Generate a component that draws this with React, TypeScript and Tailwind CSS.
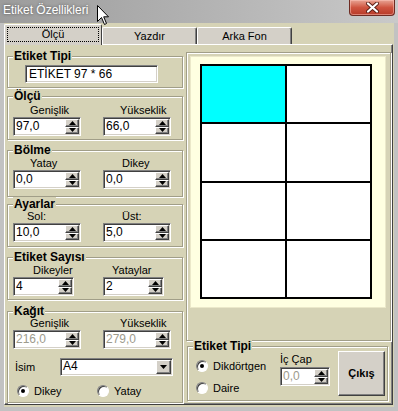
import type { ReactNode } from "react";

const raised =
  "border border-t-white border-l-white border-r-[#404040] border-b-[#404040] bg-[#d4d0c8] shadow-[inset_-1px_-1px_0_#808080]";
const sunken =
  "border border-t-[#808080] border-l-[#808080] border-r-white border-b-white bg-white shadow-[inset_1px_1px_0_#404040,inset_-1px_-1px_0_#d4d0c8]";

function Arrow({ down }: { down?: boolean }) {
  return (
    <svg width="7" height="4" viewBox="0 0 7 4">
      <path d={down ? "M0 0H7L3.5 4Z" : "M3.5 0L7 4H0Z"} fill="black" />
    </svg>
  );
}

function Spin({
  value,
  className = "",
  disabled,
}: {
  value: string;
  className?: string;
  disabled?: boolean;
}) {
  return (
    <div className={`flex h-[19px] ${sunken} ${className}`}>
      <div
        className={`flex-1 pl-[2px] pt-[1px] text-[12px] leading-[15px] ${
          disabled ? "text-[#9d9b8d]" : "text-black"
        }`}
      >
        {value}
      </div>
      <div className="flex w-[15px] flex-col py-[1px] pr-[1px]">
        <div className={`flex flex-1 items-center justify-center ${raised}`}>
          <Arrow />
        </div>
        <div className={`flex flex-1 items-center justify-center ${raised}`}>
          <Arrow down />
        </div>
      </div>
    </div>
  );
}

function Radio({ checked, label }: { checked?: boolean; label: string }) {
  return (
    <div className="flex h-[12px] items-center gap-[5px]">
      <div className="flex h-[12px] w-[12px] items-center justify-center rounded-full border border-t-[#808080] border-l-[#808080] border-r-white border-b-white bg-white shadow-[inset_1px_1px_0_#404040]">
        {checked && <div className="h-[4px] w-[4px] rounded-full bg-black" />}
      </div>
      <span className="text-[11px] leading-[13px]">{label}</span>
    </div>
  );
}

function Group({
  title,
  className,
  children,
}: {
  title: string;
  className: string;
  children?: ReactNode;
}) {
  return (
    <div
      className={`relative shrink-0 border border-[#a19e88] shadow-[inset_1px_1px_0_#fff,1px_1px_0_#fff] ${className}`}
    >
      <span className="absolute -top-[8px] left-[5px] bg-[#d6d3b6] px-[1px] text-[12px] font-bold leading-[14px]">
        {title}
      </span>
      {children}
    </div>
  );
}

function Pair({
  top,
  labels,
  pads,
  values,
  wide = true,
  disabled,
}: {
  top: string;
  labels: [string, string];
  pads: [string, string];
  values: [string, string];
  wide?: boolean;
  disabled?: boolean;
}) {
  const w = wide ? "w-[68px]" : "w-[61px]";
  return (
    <div className={top}>
      <div className="flex h-[13px] text-[11px] leading-[13px]">
        <div className={`w-[89px] ${pads[0]}`}>{labels[0]}</div>
        <div className={pads[1]}>{labels[1]}</div>
      </div>
      <div className="flex">
        <div className="w-[89px]">
          <Spin value={values[0]} className={`ml-[5px] ${w}`} disabled={disabled} />
        </div>
        <Spin value={values[1]} className={`ml-[6px] ${w}`} disabled={disabled} />
      </div>
    </div>
  );
}

function Tab({ label, selected }: { label: string; selected?: boolean }) {
  if (selected) {
    return (
      <div className="relative z-10 -mb-[1px] flex h-[21px] w-[98px] rounded-t-[2px] border border-b-0 border-t-white border-l-white border-r-[#404040] bg-[#d4d0c8] p-[2px] pb-[3px]">
        <div className="flex flex-1 items-center justify-center border border-dotted border-black text-[11px] leading-[13px]">
          {label}
        </div>
      </div>
    );
  }
  return (
    <div className="flex h-[17px] w-[95px] items-center justify-center rounded-t-[2px] border border-b-0 border-t-white border-l-white border-r-[#404040] bg-[#d4d0c8] text-[11px] leading-[13px] shadow-[inset_-1px_0_0_#808080]">
      {label}
    </div>
  );
}

export default function App() {
  const cells = [true, false, false, false, false, false, false, false];
  return (
    <div className="relative h-[411px] w-[398px] overflow-hidden bg-[#c2c2c2] font-['Liberation_Sans',Arial,sans-serif] text-black select-none">
      <div className="flex h-[23px] items-start justify-between bg-linear-to-r from-[#9c9c9c] via-[#b2b2b2] to-[#c9c9c9]">
        <span className="ml-[3px] mt-[3px] text-[12px] leading-[14px] text-white [text-shadow:0_0_3px_rgba(70,70,70,0.9)]">
          Etiket Özellikleri
        </span>
        <div className="mr-[3px] flex h-[16px] w-[46px] items-center justify-center rounded-b-[4px] border border-t-0 border-[#6e2b22] bg-linear-to-b from-[#e7a394] via-[#cf5440] to-[#b63a28] shadow-[inset_0_0_0_1px_rgba(255,200,190,0.5)]">
          <svg width="13" height="11" viewBox="0 0 13 11">
            <path
              d="M2 1.5L11 9.5M11 1.5L2 9.5"
              stroke="#5a1d15"
              strokeWidth="4"
              strokeLinecap="round"
            />
            <path
              d="M2 1.5L11 9.5M11 1.5L2 9.5"
              stroke="white"
              strokeWidth="2.2"
              strokeLinecap="round"
            />
          </svg>
        </div>
      </div>

      <div className="mx-[4px] flex h-[384px] flex-col bg-[#d6d3b6]">
        <div className="flex h-[21px] items-end">
          <Tab label="Ölçü" selected />
          <Tab label="Yazdır" />
          <Tab label="Arka Fon" />
        </div>

        <div className="flex h-[361px] w-[389px] border border-t-white border-l-white border-r-[#404040] border-b-[#404040] shadow-[inset_-1px_-1px_0_#808080]">
          <div className="ml-[2px] flex w-[176px] flex-col">
            <Group title="Etiket Tipi" className="mt-[11px] h-[32px]">
              <div
                className={`ml-[17px] mt-[8px] h-[18px] w-[133px] pl-[3px] text-[12px] leading-[16px] ${sunken}`}
              >
                ETİKET 97 * 66
              </div>
            </Group>

            <Group title="Ölçü" className="mt-[8px] h-[44px]">
              <Pair
                top="mt-[7px]"
                labels={["Genişlik", "Yükseklik"]}
                pads={["pl-[22px]", "pl-[23px]"]}
                values={["97,0", "66,0"]}
              />
            </Group>

            <Group title="Bölme" className="mt-[10px] h-[47px]">
              <Pair
                top="mt-[6px]"
                labels={["Yatay", "Dikey"]}
                pads={["pl-[22px]", "pl-[25px]"]}
                values={["0,0", "0,0"]}
              />
            </Group>

            <Group title="Ayarlar" className="mt-[7px] h-[43px]">
              <Pair
                top="mt-[5px]"
                labels={["Sol:", "Üst:"]}
                pads={["pl-[19px]", "pl-[25px]"]}
                values={["10,0", "5,0"]}
              />
            </Group>

            <Group title="Etiket Sayısı" className="mt-[10px] h-[43px]">
              <Pair
                top="mt-[6px]"
                labels={["Dikeyler", "Yataylar"]}
                pads={["pl-[25px]", "pl-[15px]"]}
                values={["4", "2"]}
                wide={false}
              />
            </Group>

            <Group title="Kağıt" className="mt-[11px] h-[92px]">
              <Pair
                top="mt-[5px]"
                labels={["Genişlik", "Yükseklik"]}
                pads={["pl-[22px]", "pl-[23px]"]}
                values={["216,0", "279,0"]}
                disabled
              />
              <div className="mt-[9px] flex h-[18px] items-center">
                <span className="w-[52px] pl-[7px] text-[11px] leading-[13px]">İsim</span>
                <div className={`flex h-[18px] w-[113px] ${sunken}`}>
                  <div className="flex-1 pl-[2px] text-[12px] leading-[15px]">A4</div>
                  <div className={`m-[1px] flex w-[15px] items-center justify-center ${raised}`}>
                    <Arrow down />
                  </div>
                </div>
              </div>
              <div className="mt-[9px] flex">
                <div className="w-[89px] pl-[9px]">
                  <Radio checked label="Dikey" />
                </div>
                <Radio label="Yatay" />
              </div>
            </Group>
          </div>

          <div className="ml-[3px] flex w-[206px] flex-col">
            <div className="mt-[7px] h-[289px] w-[205px] shrink-0 border border-[#a19e88] shadow-[inset_1px_1px_0_#fff,1px_1px_0_#fff]">
              <div className="ml-[3px] mt-[3px] h-[252px] w-[196px] border border-[#ebe8c9] bg-[#ffffe1] pl-[9px] pt-[7px]">
                <div className="grid h-[235px] w-[172px] grid-cols-2 grid-rows-4 gap-[2px] border-2 border-black bg-black">
                  {cells.map((c, i) => (
                    <div key={i} className={c ? "bg-[#00ffff]" : "bg-white"} />
                  ))}
                </div>
              </div>
            </div>

            <Group title="Etiket Tipi" className="ml-[1px] mt-[5px] h-[55px] w-[201px]">
              <div className="flex">
                <div className="flex w-[92px] flex-col gap-[10px] pl-[8px] pt-[13px]">
                  <Radio checked label="Dikdörtgen" />
                  <Radio label="Daire" />
                </div>
                <div className="w-[58px] pt-[6px]">
                  <div className="h-[13px] text-[11px] leading-[13px]">İç Çap</div>
                  <Spin value="0,0" className="mt-[1px] w-[50px]" disabled />
                </div>
                <div
                  className={`mt-[4px] flex h-[45px] w-[47px] items-center justify-center text-[11px] font-bold leading-[13px] ${raised}`}
                >
                  Çıkış
                </div>
              </div>
            </Group>
          </div>
        </div>
      </div>

      <svg
        className="absolute left-[97px] top-[5px]"
        width="13"
        height="21"
        viewBox="0 0 13 21"
      >
        <path
          d="M0.5 0.5V16.5L4.5 12.5L7.5 19.5L9.5 18.5L6.7 11.8H11.5Z"
          fill="white"
          stroke="black"
          strokeWidth="1"
          strokeLinejoin="round"
        />
      </svg>
    </div>
  );
}
